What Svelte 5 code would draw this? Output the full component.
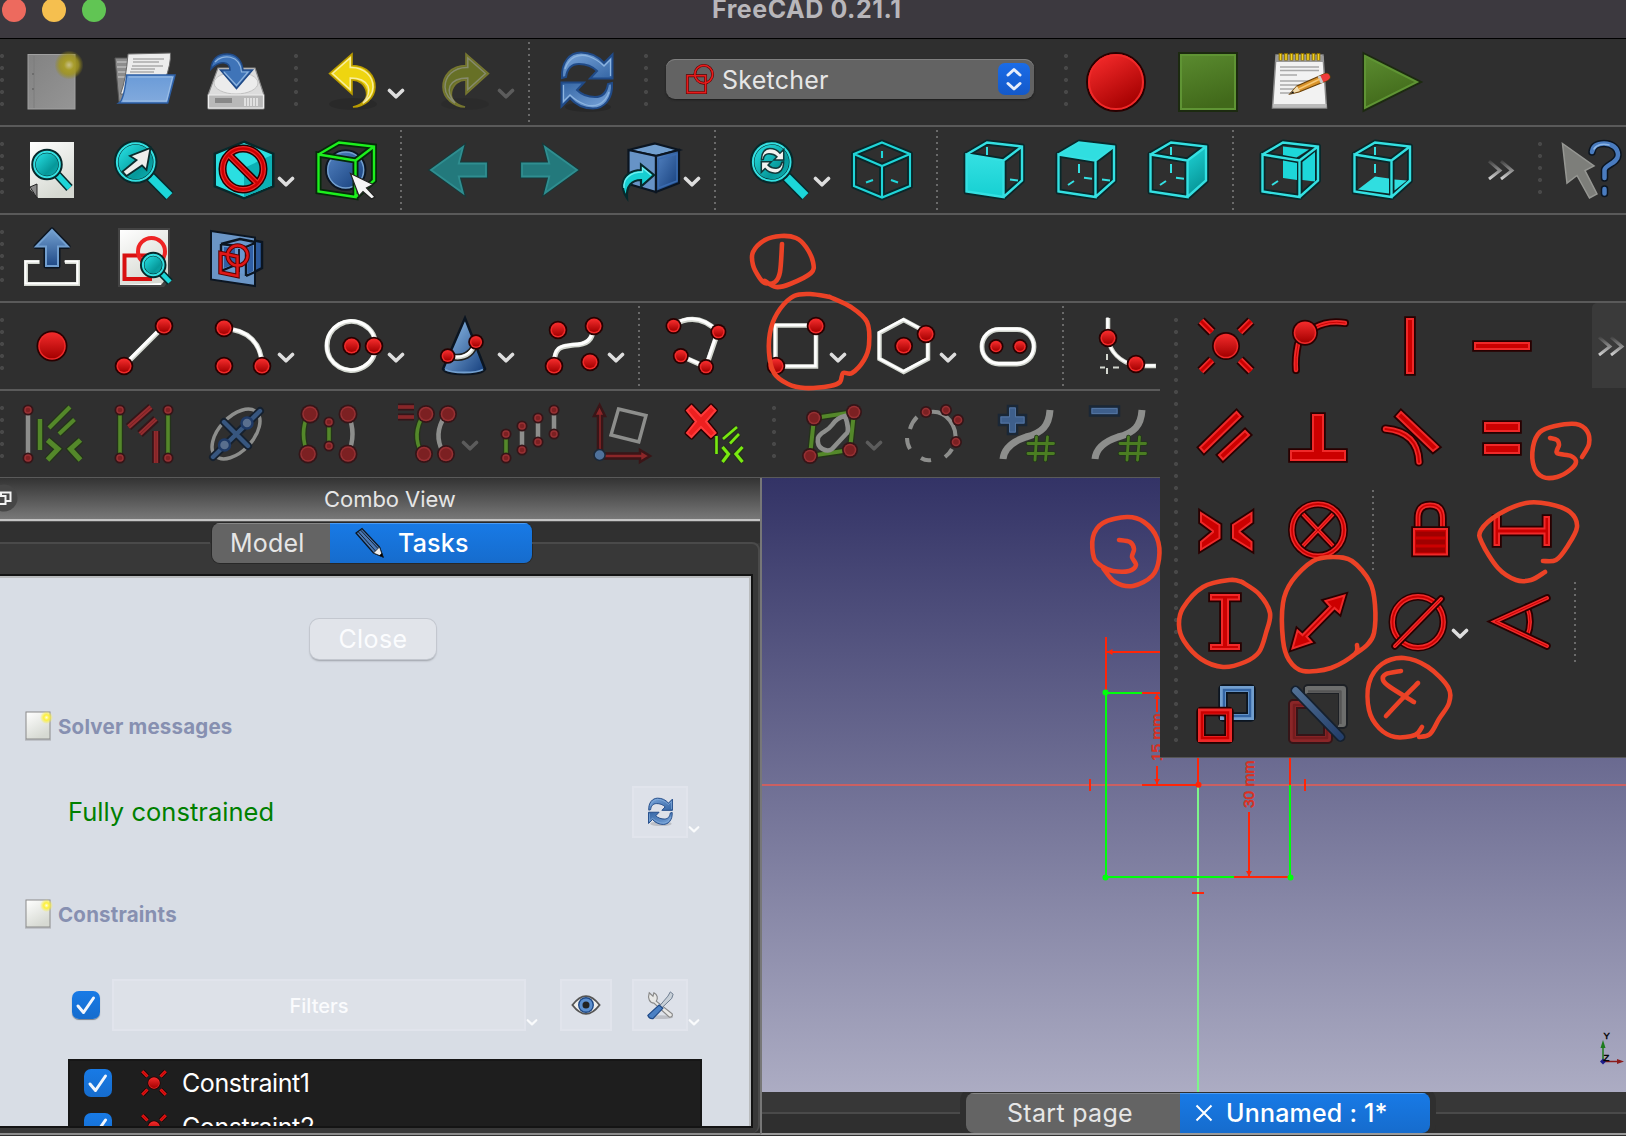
<script>
  // ---- drawing helpers: every icon lives in a 64 x 64 box ----
  const dot = (x, y, r = 9.3, dim = false) =>
    `<circle cx="${x}" cy="${y}" r="${r}" fill="${dim ? '#351518' : '#280000'}"/><circle cx="${x}" cy="${y}" r="${r - 1.7}" fill="${dim ? '#973033' : '#ef2929'}"/><circle cx="${x}" cy="${y}" r="${Math.max(r - 3.2, 1)}" fill="${dim ? '#7c2022' : 'url(#gRed)'}"/>`;
  const line = (d, w, c) =>
    `<path d="${d}" fill="none" stroke="${c}" stroke-width="${w}"/>`;
  const triple = (d, w, a, b, c, cap = 'butt') =>
    `<g fill="none" stroke-linecap="${cap}"><path d="${d}" stroke="${a}" stroke-width="${w}"/><path d="${d}" stroke="${b}" stroke-width="${w - 3.6}"/><path d="${d}" stroke="${c}" stroke-width="${Math.max(w - 7, 1)}"/></g>`;
  const redLine = (d, w = 9) => triple(d, w, '#280000', '#ef2929', '#cc0000', 'round');
  const redShape = (d) =>
    `<path d="${d}" fill="#cc0000" stroke="#280000" stroke-width="5.6"/><path d="${d}" fill="#cc0000" stroke="#ef2929" stroke-width="2"/>`;
  const shape = (d, fill, edge, hi) =>
    `<path d="${d}" fill="${fill}" stroke="${edge}" stroke-width="5" stroke-linejoin="round"/><path d="${d}" fill="${fill}" stroke="${hi}" stroke-width="2"/>`;
  const white = (d, w = 5) =>
    `<path d="${d}" fill="none" stroke="#d3d7cf" stroke-width="${w}"/><path d="${d}" fill="none" stroke="#fff" stroke-width="${w - 2}" transform="translate(-.5 -.6)"/>`;
  const green = (d, w = 4.4, c = '#54882a') =>
    line(d, w + 2.6, '#24331a') + line(d, w, c);
  const lime = (d, w = 2.6) => green(d, w, '#79ea10');
  const dimRed = (d, w = 8) => triple(d, w, '#351518', '#942c2f', '#7c2022');
  const grey = (d, w = 4.5) => line(d, w, '#8d8e8c');

  // wire cube shared by the standard-view icons
  const edges = 'M4.500 16.500L41.500 22.500V59L4.500 53.500ZM4.500 16.500L25 4.500L60 8.500V42.500L41.500 59M41.500 22.500L60 8.500';
  const cube = (fill, ticks) =>
    `<path d="${edges}" fill="none" stroke="#08282a" stroke-width="6" stroke-linejoin="round"/>${fill}${ticks ? `<path d="${ticks}" stroke="#34e0e2" stroke-width="2" fill="none"/>` : ''}<path d="${edges}" fill="none" stroke="#34e0e2" stroke-width="2.400"/>`;

  const lens = (x, y, r, hx, hy) => {
    const k = r * 0.77;
    const h = `M${x + k} ${y + k}L${hx} ${hy}`;
    const w = r * 0.42;
    return `<path d="${h}" stroke="#06292b" stroke-width="${w + 3}"/><path d="${h}" stroke="#1cd6d9" stroke-width="${w}"/><circle cx="${x}" cy="${y}" r="${r}" fill="url(#gTeal)" stroke="#06292b" stroke-width="4.500"/><circle cx="${x}" cy="${y}" r="${r - 0.7}" fill="none" stroke="#34e0e2" stroke-width="2"/>`;
  };

  const swirl = 'M8 28C7 12 16 2.500 27 2.500C36 2.500 44 6 50 13L58.500 4.500V28.500H36L43 21C38 16 31 14 25 14C16 14 13 20 12 27Z';
  const glint = 'M11 19C15 7 25 3 35 6.500C42 9 47 13 50 16L56.500 9.500V26';
  const refresh = `<ellipse cx="34" cy="57" rx="23" ry="5" fill="#000" opacity=".15"/><g fill="url(#gBlue)" stroke="#204a87" stroke-width="2"><path d="${swirl}"/><path d="${swirl}" transform="rotate(180 33 30.500)"/></g><g fill="none" stroke="#8cb4e0" stroke-width="1.300"><path d="${glint}"/><path d="${glint}" transform="rotate(180 33 30.500)"/></g>`;
  const undo = (a, b) =>
    `<ellipse cx="31" cy="54" rx="24" ry="6" fill="#000" opacity=".12"/><path d="M7.500 23.500L30 4V15.500C45 15.500 53 26 53 37C53 48 42 57 31 57C42 54 45.500 48 44.500 42C43 34 37 30 30 30V44Z" fill="${a}" stroke="${b}" stroke-width="1.600"/><path d="M10.500 23.500L28.200 8V17.500C43 17 51 27 51 37C51 44 46 50 41 53C46 47 48 41 46 36C43 30 37 28 28.200 28V39.500Z" fill="none" stroke="#fff" stroke-opacity=".6" stroke-width="1.500"/>`;
  const coincident =
    dot(32, 32, 14) +
    [['7 7', '18 18'], ['57 7', '46 18'], ['7 57', '18 46'], ['57 57', '46 46']]
      .map(([a, b]) => triple(`M${a}L${b}`, 10, '#280000', '#ef2929', '#cc0000'))
      .join('');
  const gridHash = line('M9 57C10 47 17 40 32 35C48 31 55 24 56 8', 7, '#8d8e8c') +
    `<g stroke-linecap="round">${line('M42.500 35L41 58M53.500 35L51.500 58M34 41.500H59.500M34 51.500H59.500', 4.600, '#22361a')}${line('M42.500 35L41 58M53.500 35L51.500 58M34 41.500H59.500M34 51.500H59.500', 2.800, '#4b7d22')}</g>`;

  const icons = {
    new: `<rect x="8" y="4.500" width="47" height="54.500" fill="url(#gPage)" stroke="#a0a0a0" stroke-width="1"/><path d="M14 6V58" stroke="#7c7c7c"/><circle cx="13" cy="24" r="1" fill="#666"/><circle cx="13" cy="39" r="1" fill="#666"/><circle cx="49" cy="15" r="14.500" fill="url(#gGlowDim)"/>`,
    open: `<path d="M3 8H30L20 52H7Z" fill="#8c8c8c" stroke="#555"/><path d="M5 12H16M5 17H15M6 22H14M6 27H14" stroke="#bbb" stroke-width="1.500"/><path d="M16 4L58.500 3Q59 14 53 30L30 44H8.500Q14 30 16 4Z" fill="#ececec" stroke="#666"/><path d="M21 9H52M21 12H47M20 16H51M19 19H43M18 22H42" stroke="#aaa" stroke-width="1.300"/><path d="M14.700 25H63L55.700 53H7Q12 50 14.700 25Z" fill="url(#gFolder)" stroke="#2d5fa5" stroke-width="1.500"/><path d="M16.500 27H60.500L54.500 51H11" fill="none" stroke="#9fc0e6"/>`,
    save: `<path d="M14 18H51L60 45V58Q60 59 59 59H5Q4 59 4 58V45Z" fill="#dcdcdc" stroke="#8a8a8a" stroke-width="1.200"/><ellipse cx="32" cy="33" rx="22" ry="11" fill="#ececec" stroke="#c2c2c2"/><path d="M4.500 45H59.500V58H4.500Z" fill="#b9b9b9" stroke="#eee" stroke-width="1.200"/><path d="M11 48H28V53H11Z" fill="#888"/><path d="M41 48V56M44 48V56M47 48V56M50 48V56M53 48V56" stroke="#fafafa" stroke-width="1.200"/><path d="M7 19C8 8 15 4 23 4C32 4 38 10 39 20H48.500L32.500 38.500L16.500 20H26C26 12 16 9 7 19Z" fill="#3f74b8" stroke="#204a87" stroke-width="1.500"/><path d="M11 12C18 4 36 4 37.500 22H44L32.500 35.500L20 22" fill="none" stroke="#8db3de" stroke-width="1.200"/>`,
    undo: undo('#eed510', '#b89a00'),
    redo: `<g transform="translate(64 0) scale(-1 1)" opacity=".52">${undo('#9aac1e', '#b8b830')}</g>`,
    refresh,
    record: `<circle cx="32" cy="32" r="29" fill="url(#gRec)" stroke="#280000" stroke-width="2"/><circle cx="32" cy="32" r="27" fill="none" stroke="#ef2929" stroke-width="2"/>`,
    stop: `<path d="M3 3H61V61H3Z" fill="url(#gGreen)" stroke="#1c2a10" stroke-width="2"/><path d="M5 5H59V59H5Z" fill="none" stroke="#5f9434" stroke-width="2"/>`,
    notes: `<path d="M8 5H55L58.500 58H4.500Z" fill="#f2f2f2" stroke="#888" stroke-width="1.500"/><path d="M8 6H55.500L56 12H7.500Z" fill="#999"/><path d="M4.800 54H58.500V57.500H4.800Z" fill="#bbb"/><path d="M12 17H51M12 20.500H51M12 25H29M12 31H51M12 35H45M12 39H30M12 43H26" stroke="#a9a9a9" stroke-width="1.300"/><path d="M12.500 3V10.500M18 3V10.500M23.500 3V10.500M29 3V10.500M34.500 3V10.500M40 3V10.500M45.500 3V10.500M50.500 3V10.500" stroke="#8a6d00" stroke-width="3.600"/><path d="M12.500 4V10M18 4V10M23.500 4V10M29 4V10M34.500 4V10M40 4V10M45.500 4V10M50.500 4V10" stroke="#f3d321" stroke-width="1.600"/><path d="M22 44L29 36L56 24Q61 22 62 27Q62 29 58 31L31 42Z" fill="#d9932a" stroke="#6b4108" stroke-width="1.300"/><path d="M22 44L29 36L32 41Z" fill="#f2dcae"/><path d="M52 26L56 24Q61 22 62 27Q62 29 58 31L55 32Z" fill="#ef3b3b"/><path d="M51 26L54 33" stroke="#ccc" stroke-width="3"/><path d="M22 44L25 41L26 43Z" fill="#111"/><path d="M31 39L52 29" stroke="#f7c876" stroke-width="1.500"/>`,
    play: `<path d="M4 4L60 32L4 60Z" fill="url(#gGreen)" stroke="#1c2a10" stroke-width="3"/><path d="M5 6L57 32L5 58Z" fill="url(#gGreen)" stroke="#5f9434" stroke-width="2"/>`,

    fitall: `<path d="M10 4H54V60H18L10 51Z" fill="url(#gSheet)"/><path d="M10 49L17 46V60Z" fill="#888" stroke="#222"/>${lens(27, 26.500, 13.500, 49.500, 50)}`,
    fitsel: `${lens(23.700, 24, 19.500, 57.500, 58)}<path d="M38.500 10L34.500 32L30 27.500L14.500 38L10.500 33.500L24.500 22L18 18Z" fill="#eeeeec" stroke="#0c2c2d" stroke-width="1.800"/>`,
    drawstyle: `<path d="M32 4L61 16V48L32 60L3 48V16Z" fill="#16cfd2" stroke="#06292b" stroke-width="3"/><path d="M32 5L60 16.500V47.500L32 59L4 47.500V16.500Z" fill="#2adfe1"/><path d="M32 30L60 17V47.500L32 59Z" fill="#0cb0b4"/><circle cx="31" cy="31" r="20.500" fill="none" stroke="#280000" stroke-width="8"/><path d="M17 17L45 45" stroke="#280000" stroke-width="8"/><circle cx="31" cy="31" r="20.500" fill="none" stroke="#ef2929" stroke-width="5"/><path d="M17 17L45 45" stroke="#ef2929" stroke-width="5"/><circle cx="31" cy="31" r="20.500" fill="none" stroke="#c00" stroke-width="2.500"/><path d="M17 17L45 45" stroke="#c00" stroke-width="2.500"/>`,
    bbox: `<circle cx="31.700" cy="32" r="19.500" fill="url(#gBall)" stroke="#0b1521" stroke-width="2.500"/><circle cx="31.700" cy="32" r="18" fill="none" stroke="#729fcf" stroke-width="1.500"/><path d="${edges}" fill="none" stroke="#06290a" stroke-width="6"/><path d="${edges}" fill="none" stroke="#1df01d" stroke-width="2.400"/><path d="M36.500 35.500L59 46.500L52.500 50L61 59L57.500 61L49 53.500L45 58Z" fill="#f4f4f4" stroke="#222" stroke-width="1.200"/>`,
    back: `<path d="M5 32L37 9L32.700 25.500H60V38.500H32.700L37 55Z" fill="#23797c" stroke="#17393a" stroke-width="4"/><path d="M5 32L37 9L32.700 25.500H60V38.500H32.700L37 55Z" fill="#23797c" stroke="#2f8e90" stroke-width="1.800"/>`,
    forward: `<path d="M59 32L27 9L31.300 25.500H4V38.500H31.300L27 55Z" fill="#23797c" stroke="#17393a" stroke-width="4"/><path d="M59 32L27 9L31.300 25.500H4V38.500H31.300L27 55Z" fill="#23797c" stroke="#2f8e90" stroke-width="1.800"/>`,
    link: `<path d="M37 5.500L61 12L38 18L10.500 12Z" fill="#729fcf" stroke="#0b1521" stroke-width="2.200"/><path d="M10.500 12L38 18V54L10.500 46Z" fill="#6793c6" stroke="#0b1521" stroke-width="2.200"/><path d="M38 18L61 12V45L38 54Z" fill="url(#gBall)" stroke="#0b1521" stroke-width="2.200"/><path d="M40.500 21L59 16V43L40.500 50Z" fill="none" stroke="#3b6cb0" stroke-width="1.500"/><path d="M9 60C2 50 2 33 23 32V26.500L36 37L23 48.500V42C14 42 8 48 9 60Z" fill="#16cfd2" stroke="#06292b" stroke-width="2.200"/><path d="M6 50C5 41 12 34 24.500 34V30L33 37" fill="none" stroke="#6ff0f2" stroke-width="1.400"/>`,
    zoomsync: `${lens(23.700, 24, 19.500, 57.500, 58)}<g transform="translate(10 9.500) scale(.44)" fill="#f2f2f0" stroke="#12393a" stroke-width="3.500"><path d="${swirl}"/><path d="${swirl}" transform="rotate(180 33 30.500)"/></g>`,
    axo: `<path d="M32 4.500L60 16V48L32 59.500L4 48V16ZM4 16L32 28L60 16M32 28V59.500" fill="none" stroke="#08282a" stroke-width="6" stroke-linejoin="round"/><path d="M32 4.500L60 16V48L32 59.500L4 48V16ZM4 16L32 28L60 16M32 28V59.500M32 13V20M16 44.500L23 42M41 42L48 44.500" fill="none" stroke="#20d5d8" stroke-width="2.100"/>`,
    front: cube('<path d="M4.500 16.500L41.500 22.500V59L4.500 53.500Z" fill="url(#gFace)"/>', 'M25 9V17M48 41.500L56 42.500'),
    top: cube('<path d="M4.500 16.500L25 4.500L60 8.500L41.500 22.500Z" fill="#30dee0"/>', 'M25 26V35M14 47L20 43M30 39.700L38 40.700M48 41.500L56 42.500'),
    right: cube('<path d="M41.500 22.500L60 8.500V42.500L41.500 59Z" fill="url(#gSide)"/>', 'M25 9V17M25 26V35M14 47L20 43M30 39.700L38 40.700'),
    rear: cube('<path d="M25 8.500L51 11.500L38.500 19.500L25 17ZM25 22.500L39 25V42L25 40ZM44.500 24L57 14V43.500L44.500 42Z" fill="#1dd6d9"/>', 'M14 47L20 43'),
    bottom: cube('<path d="M8 51.500L25 38.500L39 40.500V55.500ZM44.500 41.500L57 42.500L44.500 52.500Z" fill="#30dee0"/>', 'M25 9V17M25 26V35'),
    help: `<path d="M4.500 5.500L36 28L27 32.500L39 56L31.500 60L19 37.500L9 45Z" fill="#7d7e7a" stroke="#969793" stroke-width="1.500"/><g fill="none" stroke-linecap="round"><path d="M34 14C35 7 40 5.500 46 5.500C54 5.500 60 10 60 17C60 25 47 27 46.500 32V40M46.500 51V55.500" stroke="#0b1521" stroke-width="7.500"/><path d="M34 14C35 7 40 5.500 46 5.500C54 5.500 60 10 60 17C60 25 47 27 46.500 32V40M46.500 51V55.500" stroke="#4a7cc0" stroke-width="4.500"/><path d="M36 11C39 6 46 5.500 51 7" stroke="#8db6e5" stroke-width="1.500"/></g>`,

    leave: `${white('M19.600 36H6V58H58V36H45', 4)}${shape('M32 4L48 20.500H38V40H26V20.500H16Z', 'url(#gBlueV)', '#0b1521', '#729fcf')}`,
    viewsketch: `<path d="M6 2H58V53L52 61H6Z" fill="#444"/><path d="M8 4H56V50L49 59H8Z" fill="url(#gSheet)"/><path d="M49 59H8L49 57Z" fill="#fff"/><path d="M12.500 29.500H38V53H12.500Z" fill="none" stroke="#d81010" stroke-width="4"/><circle cx="39.500" cy="25.500" r="13.500" fill="none" stroke="#ee2424" stroke-width="4"/>${lens(41.200, 39, 11, 58, 56)}`,
    mapsketch: `<path d="M17 18L38 12L58 16V42L43 50L17 44Z" fill="#2c5a9c" stroke="#0b1521" stroke-width="2.500"/><path d="M7 5L51 11.500V60L7 53.500Z" fill="#6f9dd2" fill-opacity=".93" stroke="#0b1521" stroke-width="2"/><path d="M17 18L36 13L51 16M17 18L42 21V50M17 18V45L29 40M42 21L51 17M42 50L51 46" fill="none" stroke="#0b1521" stroke-width="2.400"/><path d="M20 21L31 22V38L20 42Z" fill="#2f5fa5"/><path d="M43.500 22L49 19V45L43.500 48Z" fill="#2f5fa5"/><path d="M35 23V46" stroke="#13233b" stroke-width="2"/><g fill="none" stroke="#5c0000" stroke-width="4.500"><path d="M16.500 27L33.500 30.500V50L16.500 46.500Z"/><circle cx="33.600" cy="29.500" r="10"/></g><g fill="none" stroke="#e01717" stroke-width="2.400"><path d="M16.500 27L33.500 30.500V50L16.500 46.500Z"/><circle cx="33.600" cy="29.500" r="10"/></g>`,

    point: dot(32, 32, 15.500),
    line: white('M12 52L52 12') + dot(12, 52) + dot(52, 12),
    arc: white('M12 15C36 15 50 30 50 52') + dot(12, 14) + dot(12, 52) + dot(50, 52),
    circle: white('M54 32A24.500 24.500 0 1 1 54 31.900') + dot(29.600, 32) + dot(52, 32),
    conic: `<path d="M33 4L53 55Q50 60 32 60Q14 60 11 55Z" fill="url(#gCone)" stroke="#0b1521" stroke-width="2.500"/><path d="M13 55.500Q18 58.500 32 58.500Q46 58.500 51 55.500" fill="none" stroke="#729fcf" stroke-width="1.800"/><path d="M16 42Q38 48 44 28" fill="none" stroke="#222" stroke-width="7"/>${white('M16 42Q38 48 44 28', 4)}${dot(15.700, 42, 7.800)}${dot(44, 28, 7.800)}`,
    bspline: white('M12 50C13 30 22 33 32 31C44 31 51 26 51 15') + dot(16, 16) + dot(52, 12) + dot(12, 52) + dot(48, 48),
    polyline: white('M9.500 11Q34 -3 54 18L42 53L17 42') + dot(9.500, 12, 8) + dot(54.400, 18, 8) + dot(16.800, 42, 8) + dot(42, 53, 8),
    rect: white('M11.500 11.500H52V52.500H11.500Z', 4.500) + dot(52, 12) + dot(12, 52),
    polygon: white('M29.700 6L54 19V45L29.700 58L5.500 45V19Z', 4.500) + dot(29.700, 32) + dot(52, 20),
    slot: `<rect x="6" y="15.500" width="52" height="34.500" rx="17" fill="none" stroke="#d3d7cf" stroke-width="4.800"/><rect x="5.600" y="15" width="52" height="34.500" rx="17" fill="none" stroke="#fff" stroke-width="3"/>${dot(20, 32.500, 7.500)}${dot(44, 32.500, 7.500)}`,
    fillet: white('M20 4V24C22 38 32 48 48 52H68', 4.500) + `<path d="M19 40V46M19 54V60M12 53.500H17M25 53.500H31" stroke="#d3d7cf" stroke-width="2"/>` + dot(20, 24) + dot(48, 50),

    c1: grey('M8 8V56') + dot(8, 8, 5.500, 1) + dot(8, 56, 5.500, 1) + green('M20 17V48') + green('M29 26L50 5', 4) + green('M39 32L54.500 17.500', 4) + green('M27.500 38L38 47L27.500 58', 5) + green('M60.500 38L50.500 47L60.500 58', 5),
    c2: green('M8 8V56', 3.600) + green('M56 8V56', 3.600) + dimRed('M16.500 25L39 5') + dimRed('M28 32L44 17') + dimRed('M44 29V61') + dot(8, 8, 5.500, 1) + dot(8, 56, 5.500, 1) + dot(56, 8, 5.500, 1) + dot(56, 56, 5.500, 1),
    c3: `<ellipse cx="32" cy="32" rx="30" ry="17" transform="rotate(-47 32 32)" fill="none" stroke="#8d8e8c" stroke-width="3.500"/>${triple('M9 55L56 9M20 20L44 44', 8, '#15202e', '#37567f', '#37567f', 'round')}<g fill="#5a6f8e" stroke="#1f3a66" stroke-width="2.500"><circle cx="43" cy="21" r="5.500"/><circle cx="20.500" cy="43" r="5.500"/></g>`,
    c4: green('M12 12Q3 32 12 52', 3.600) + grey('M52 12Q61 32 52 52') + green('M33 20V44', 3.600) + dot(14, 12, 9.500, 1) + dot(12, 52, 9.500, 1) + dot(52, 12, 9.500, 1) + dot(52, 52, 9.500, 1) + dot(33, 20, 5.500, 1) + dot(33, 44, 5.500, 1),
    c5: dimRed('M2 5H18', 7) + dimRed('M2 15H18', 7) + green('M28 12Q15 32 26 52', 3.600) + grey('M49 14Q37 32 47 50') + dot(30, 12, 9, 1) + dot(52, 12, 9, 1) + dot(28, 52, 9, 1) + dot(50, 52, 9, 1),
    c6: green('M8 32V56', 3.600) + grey('M24 24V48M40 16V40M56 8V32') + [8, 24, 40, 56].map((x, i) => dot(x, 32 - i * 8, 5.500, 1) + dot(x, 56 - i * 8, 5.500, 1)).join(''),
    c7: `<path d="M8 52V14H4L9.600 3L15 14H12V52ZM10 51.500H50V48L60 54L50 60V56.500H10Z" fill="#8b2628" stroke="#3a1517" stroke-width="2.500"/>${line('M28.500 7L56 13.500L48.800 40L21 33Z', 3.400, '#8d8e8c')}<circle cx="9.600" cy="53" r="5.500" fill="#4f719b" stroke="#1b2838" stroke-width="1.500"/>`,
    c8: shape('M5 8.500L9.500 4L19 14L29 4L33.500 8.500L24 19.500L33.500 31L29 35L19 25L9.500 35L5 31L14 19.500Z', '#ee2020', '#280000', '#ff3a3a') + lime('M34.500 34V52') + lime('M41 37L55 25') + lime('M48 41.500L57 32') + lime('M40.500 45L46.500 52L40.500 60', 3.200) + lime('M60.500 45L54 52L60.500 60', 3.200),
    c9: green('M14 16L54 10L50 48L10 54Z', 4) + line('M18 36C20 30 27 30 32 23C36 17 40 15 45 14C48 22 49 30 46 32L32 47C28 50 16 48 18 36Z', 4.500, '#8d8e8c') + dot(14, 16, 8, 1) + dot(54, 10, 8, 1) + dot(50, 48, 8, 1) + dot(10, 54, 8, 1),
    c10: grey('M28 10C44 8 56 24 53 40M15 15Q10 20 8 27M5 36Q5 42 8 47M19 56Q24 59 29 58M43 55Q48 51 50 47', 4) + dot(24, 10, 6, 1) + dot(44, 8, 6, 1) + dot(56, 18, 6, 1) + dot(54, 40, 6, 1),
    c11: gridHash + `<path d="M14 4H23V13H32V23H23V32H14V23H5V13H14Z" fill="#3e5f8c" stroke="#1a2736" stroke-width="2.500"/><path d="M15.500 6H21.500V15H30V21H21.500V30H15.500V21H7V15H15.500Z" fill="none" stroke="#52739f"/>`,
    c12: gridHash + `<path d="M4 4.500H33V13.500H4Z" fill="#3e5f8c" stroke="#1a2736" stroke-width="2.500"/><path d="M6 6.500H31V11.500H6Z" fill="none" stroke="#52739f"/>`,

    coincident,
    pointon: redLine('M12 30Q9 44 10 56', 8) + redLine('M28 14Q42 6 59 9', 8) + dot(19, 18.700, 13),
    vertical: redShape('M29 5H35V59H29Z'),
    horizontal: redShape('M5 29H59V35H5Z'),
    parallel: redShape('M6 41.500L42.500 6L46.500 10.500L10 46Z') + redShape('M25 49L51 25L55 29L29 53.500Z'),
    perpendicular: redShape('M27 9H37V45H59V54H5V45H27Z'),
    tangent: redShape('M23 6L60 41L55 45L19 10.500Z') + redLine('M7.500 23Q40 26 41 56', 9),
    equal: redShape('M15 17H49V25H15Z') + redShape('M15 39H49V47H15Z'),
    symmetric: redShape('M7 15L25.500 27V40L7 51.500V44L19 34V33L7 24Z') + redShape('M57.500 15L39 27V40L57.500 51.500V44L45.500 34V33L57.500 24Z'),
    block: redLine('M14 13L50 51M50 13L14 51', 7.500) + `<g fill="none"><circle cx="32" cy="32" r="26" stroke="#280000" stroke-width="8"/><circle cx="32" cy="32" r="26" stroke="#ef2929" stroke-width="4.800"/><circle cx="32" cy="32" r="26" stroke="#c00" stroke-width="1.800"/></g>`,
    lock: redLine('M20 30V20Q20 7 32 7Q44.500 7 44.500 20V30', 8.500) + redShape('M16 31H49V56.500H16Z') + `<path d="M18 36H47M18 44H47M18 52H47" stroke="#a00000" stroke-width="5"/>`,
    hdist: redShape('M4.500 19H9V30.500H54.500V19H59V47H54.500V35.500H9V47H4.500Z'),
    vdist: redShape('M17 5H45V9.500H34V55H45V59H17V55H28V9.500H17Z'),
    distance: redShape('M58.500 5.500L53.500 22.500L48.500 18L20.500 46.500L25.500 52L6.500 58.500L11.500 40.500L16.500 45L44.500 16.500L39.500 11Z'),
    diameter: `<g fill="none"><circle cx="32" cy="32" r="25.500" stroke="#280000" stroke-width="8"/><circle cx="32" cy="32" r="25.500" stroke="#ef2929" stroke-width="4.800"/><circle cx="32" cy="32" r="25.500" stroke="#c00" stroke-width="1.800"/></g>${redLine('M9 56L55 9', 7.500)}`,
    angle: redLine('M39 17Q45 32 39 46', 7.500) + redLine('M59 8L7 31.500L59 56', 7.500),
    driving: `<g fill="none"><path d="M29 7H57V35H29Z" stroke="#0b1521" stroke-width="9.500" stroke-linejoin="round"/><path d="M29 7H57V35H29Z" stroke="#729fcf" stroke-width="6"/><path d="M30 8H56V34H30Z" stroke="#3465a4" stroke-width="2.500"/><path d="M7 29.500H35V57H7Z" stroke="#280000" stroke-width="9.500" stroke-linejoin="round"/><path d="M7 29.500H35V57H7Z" stroke="#ef2929" stroke-width="6"/><path d="M8 30.500H34V56H8Z" stroke="#c00" stroke-width="2.500"/></g>`,
    activate: `<g fill="none" stroke-linejoin="round"><path d="M22 7H57V42H22Z" stroke="#1d2025" stroke-width="10"/><path d="M22 7H57V42H22Z" stroke="#6d6e6d" stroke-width="6"/><path d="M23 8H56V41H23Z" stroke="#555" stroke-width="2.500"/><path d="M7 22H42V57H7Z" stroke="#351518" stroke-width="10" fill="#2f2f2f"/><path d="M7 22H42V57H7Z" stroke="#8b2628" stroke-width="6"/><path d="M8 23H41V56H8Z" stroke="#761c1e" stroke-width="2.500"/><path d="M13 12H52V50Z" fill="#2f2f2f"/><path d="M22 7H57V42H54V10H22Z" stroke="#1d2025" stroke-width="4"/><path d="M19 5H59V44H53V11H19Z" fill="#6d6e6d"/><path d="M22 9.500H54.500V42" stroke="#555" stroke-width="2.500"/><path d="M9.500 8.500L54.500 55" stroke="#15202e" stroke-width="10" stroke-linecap="round"/><path d="M9.500 8.500L54.500 55" stroke="url(#gSlash)" stroke-width="6.500" stroke-linecap="round"/></g>`,

    note: `<rect x="4" y="2" width="24" height="27" fill="url(#gSheet)" stroke="#8a8a8a"/><path d="M3 30H29" stroke="#777" stroke-opacity=".5"/><circle cx="24.500" cy="7.500" r="6.500" fill="url(#gGlow)"/>`,
    eye: `<path d="M3 32Q32 -6 61 32Q32 70 3 32Z" fill="#eeeeec" stroke="#555" stroke-width="4"/><circle cx="32" cy="32" r="15.500" fill="#5c8fcf" stroke="#204a87" stroke-width="3"/><circle cx="32" cy="32" r="7.500" fill="#222"/>`,
    tools: `<ellipse cx="34" cy="58" rx="26" ry="4" fill="#000" opacity=".15"/><path d="M9 6L17 13L19 6C27 10 28 18 24 24L58 51Q60 58 52 58L19 28C10 28 5 18 9 6Z" fill="#e8e8e6" stroke="#888" stroke-width="2.500"/><path d="M54 4L60 9L57 18L36 38L31 34L49 13Z" fill="#c8d0d8" stroke="#68788c" stroke-width="2"/><path d="M30 32L38 39L17 61Q9 62 6 54Z" fill="#4a80c4" stroke="#204a87" stroke-width="2.500"/>`,
    pencil: `<path d="M2 12L14 3L49 40L56 60L37 52Z" fill="#4b78b4" stroke="#0b1521" stroke-width="2.500"/><path d="M6 9L41 48M11 6L46 43" stroke="#0b1521" stroke-width="1.800"/><path d="M37 52L49 40L56 60Z" fill="#eee" stroke="#0b1521" stroke-width="1.500"/><path d="M48 57L54 52L56 60Z" fill="#000"/>`,
    sketch: `<g fill="none"><path d="M5 25H44V61H5Z" stroke="#5c0000" stroke-width="6"/><circle cx="40" cy="22" r="19" stroke="#5c0000" stroke-width="6"/><path d="M5 25H44V61H5Z" stroke="#e61d1d" stroke-width="3.400"/><circle cx="40" cy="22" r="19" stroke="#e61d1d" stroke-width="3.400"/></g>`,
  };

  const b = (n, dd = 0) => ({ k: 'btn', n, dd });
  const dim = (n) => ({ k: 'btn', n, dd: 2 });
  const sep = { k: 'sep' };
  const grip = { k: 'grip' };
  const bars = [
    [grip, b('new'), b('open'), b('save'), grip, b('undo', 1), dim('redo'), sep, b('refresh'), grip, { k: 'combo' }, grip, b('record'), b('stop'), b('notes'), b('play')],
    [grip, b('fitall'), b('fitsel'), b('drawstyle', 1), b('bbox'), sep, b('back'), b('forward'), b('link', 1), sep, b('zoomsync', 1), b('axo'), sep, b('front'), b('top'), b('right'), sep, b('rear'), b('bottom'), { k: 'more' }, grip, b('help')],
    [grip, b('leave'), b('viewsketch'), b('mapsketch')],
    [grip, b('point'), b('line'), b('arc', 1), b('circle', 1), b('conic', 1), b('bspline', 1), sep, b('polyline'), b('rect', 1), b('polygon', 1), b('slot'), sep, b('fillet')],
    [grip, b('c1'), b('c2'), b('c3'), b('c4'), dim('c5'), b('c6'), b('c7'), b('c8'), grip, dim('c9'), b('c10'), b('c11'), b('c12')],
  ];
  const palette = [
    [b('coincident'), b('pointon'), b('vertical'), b('horizontal')],
    [b('parallel'), b('perpendicular'), b('tangent'), b('equal')],
    [b('symmetric'), b('block'), sep, b('lock'), b('hdist')],
    [b('vdist'), b('distance'), b('diameter', 1), b('angle'), sep],
    [b('driving'), b('activate')],
  ];

  // ---- freehand ink, smoothed through its points ----
  const strokes = [
    [[765, 281], [776, 287], [790, 284], [811, 273], [813, 262], [806, 247], [796, 238], [781, 236], [765, 240], [753, 252], [753, 265], [759, 277], [765, 283], [775, 282], [780, 272], [782, 244]],
    [[830, 297], [810, 294], [794, 296], [780, 309], [771, 328], [769, 352], [774, 373], [788, 384], [805, 388], [830, 386], [840, 382], [843, 373], [852, 373], [864, 360], [869, 345], [867, 322], [851, 307], [830, 297]],
    [[1582, 457], [1589, 444], [1587, 431], [1576, 424], [1555, 426], [1540, 432], [1533, 447], [1534, 467], [1543, 477], [1557, 477], [1570, 470], [1576, 462], [1571, 456], [1557, 453], [1559, 445], [1557, 440], [1550, 438]],
    [[1545, 572], [1531, 580], [1516, 580], [1498, 568], [1482, 543], [1481, 530], [1499, 514], [1526, 503], [1549, 504], [1570, 512], [1577, 527], [1567, 547], [1556, 560], [1543, 561]],
    [[1242, 582], [1230, 580], [1203, 587], [1183, 608], [1179, 625], [1184, 641], [1201, 659], [1223, 667], [1245, 662], [1259, 652], [1266, 633], [1270, 613], [1259, 594], [1242, 582]],
    [[1357, 645], [1355, 654], [1331, 668], [1303, 671], [1289, 660], [1283, 640], [1283, 603], [1292, 581], [1313, 561], [1333, 557], [1352, 561], [1370, 582], [1375, 605], [1374, 633], [1367, 645], [1355, 654]],
    [[1119, 540], [1130, 542], [1134, 549], [1132, 557], [1136, 565], [1129, 571], [1113, 571], [1103, 567], [1094, 558], [1093, 537], [1103, 523], [1127, 517], [1144, 522], [1157, 538], [1159, 559], [1152, 576], [1133, 586], [1115, 582], [1103, 568]],
    [[1422, 727], [1415, 735], [1395, 737], [1379, 728], [1369, 710], [1369, 683], [1382, 664], [1404, 658], [1428, 667], [1448, 687], [1449, 703], [1439, 719], [1430, 734], [1419, 737]],
    [[1401, 671], [1386, 674], [1383, 680], [1390, 687], [1414, 702]],
    [[1418, 683], [1402, 699], [1386, 716]],
  ];
  const smooth = (p) => {
    let d = `M${p[0]}`;
    for (let i = 0; i < p.length - 1; i++) {
      const a = p[i - 1] ?? p[i], s = p[i], e = p[i + 1], z = p[i + 2] ?? e;
      d += `C${s[0] + (e[0] - a[0]) / 6} ${s[1] + (e[1] - a[1]) / 6} ${e[0] - (z[0] - s[0]) / 6} ${e[1] - (z[1] - s[1]) / 6} ${e[0]} ${e[1]}`;
    }
    return d;
  };
  const ink = strokes.map(smooth);
  const constraints = ['Constraint1', 'Constraint2'];
</script>

{#snippet icon(n, cls = '', box = '0 0 64 64')}
  <svg class="icon {cls}" viewBox={box}>{@html icons[n]}</svg>
{/snippet}

{#snippet chevron(cls = '')}
  <svg class="chev {cls}" viewBox="0 0 18 12"><path d="M2.500 2.500L9 8.800L15.500 2.500" /></svg>
{/snippet}

{#snippet raquo()}
  <svg class="raquo" viewBox="0 0 28 20"><path d="M1 1L12 10.500L1 19M13 1L24 10.500L13 19" /></svg>
{/snippet}

{#snippet items(list)}
  {#each list as it}
    {#if it.k === 'btn'}
      <div class="btn" class:dd={it.dd}>
        {@render icon(it.n)}
        {#if it.dd}{@render chevron(it.dd === 2 ? 'faded' : '')}{/if}
      </div>
    {:else if it.k === 'sep'}
      <i class="sep"></i>
    {:else if it.k === 'grip'}
      <i class="grip"></i>
    {:else if it.k === 'more'}
      <div class="more">{@render raquo()}</div>
    {:else}
      <div class="combo">
        {@render icon('sketch', 'wb')}
        <span>Sketcher</span>
        <svg class="updown" viewBox="0 0 32 32"><path d="M10 12L16 6.500L22 12M10 20.500L16 26L22 20.500" /></svg>
      </div>
    {/if}
  {/each}
{/snippet}

{#snippet check()}
  <svg class="check" viewBox="0 0 28 28"><path d="M6 15L11.500 21.500L21.500 7" /></svg>
{/snippet}

<svg class="defs" width="0" height="0">
  <defs>
    <linearGradient id="gRed" x2="0" y2="1"><stop stop-color="#ef2929" /><stop offset="1" stop-color="#a40000" /></linearGradient>
    <linearGradient id="gRec" x2=".6" y2="1"><stop stop-color="#ff3030" /><stop offset="1" stop-color="#a40000" /></linearGradient>
    <linearGradient id="gGreen" x2=".3" y2="1"><stop stop-color="#5b8c30" /><stop offset="1" stop-color="#41691a" /></linearGradient>
    <linearGradient id="gTeal" x2="1" y2="1"><stop offset=".2" stop-color="#20d2d5" /><stop offset=".65" stop-color="#06989a" /><stop offset="1" stop-color="#0fb4b6" /></linearGradient>
    <linearGradient id="gFace" x2="0" y2="1"><stop stop-color="#34e0e2" /><stop offset="1" stop-color="#16d0d2" /></linearGradient>
    <linearGradient id="gSide" x2=".3" y2="1"><stop stop-color="#20d5d8" /><stop offset="1" stop-color="#069496" /></linearGradient>
    <linearGradient id="gBlue" x2="1" y2="1"><stop stop-color="#7ba7dc" /><stop offset="1" stop-color="#3465a4" /></linearGradient>
    <linearGradient id="gBlueV" x2="0" y2="1"><stop stop-color="#729fcf" /><stop offset="1" stop-color="#204a87" /></linearGradient>
    <linearGradient id="gFolder" x2="0" y2="1"><stop stop-color="#6a9bd8" /><stop offset="1" stop-color="#82aadd" /></linearGradient>
    <linearGradient id="gBall" x2="1" y2="1"><stop stop-color="#5585c4" /><stop offset=".8" stop-color="#204a87" /></linearGradient>
    <linearGradient id="gCone" x2="1" y2="1"><stop offset=".3" stop-color="#729fcf" /><stop offset=".9" stop-color="#204a87" /></linearGradient>
    <linearGradient id="gSlash" x2="1" y2="1"><stop stop-color="#506f94" /><stop offset="1" stop-color="#243f6b" /></linearGradient>
    <linearGradient id="gSheet" x2=".5" y2="1"><stop stop-color="#fff" /><stop offset="1" stop-color="#d6d9d2" /></linearGradient>
    <linearGradient id="gPage" x2="1" y2="1"><stop stop-color="#828282" /><stop offset="1" stop-color="#959595" /></linearGradient>
    <radialGradient id="gGlowDim"><stop stop-color="#c8c08a" /><stop offset=".35" stop-color="#a79c2a" /><stop offset=".65" stop-color="#a09420" stop-opacity=".85" /><stop offset="1" stop-color="#968a10" stop-opacity="0" /></radialGradient>
    <radialGradient id="gGlow"><stop stop-color="#fffde0" /><stop offset=".4" stop-color="#fdf03a" /><stop offset="1" stop-color="#fdf03a" stop-opacity="0" /></radialGradient>
    <linearGradient id="gFade" x1="0" y1="0" x2="0" y2="20" gradientUnits="userSpaceOnUse"><stop stop-color="#3a3a3a" /><stop offset="1" stop-color="#d8d8d8" /></linearGradient>
  </defs>
</svg>

<div class="app">
  <header class="titlebar">
    <div class="lights"><i class="r"></i><i class="y"></i><i class="g"></i></div>
    <span>FreeCAD 0.21.1</span>
  </header>

  {#each bars as list}
    <div class="bar">{@render items(list)}</div>
  {/each}

  <main>
    <section class="dock">
      <div class="docktitle">
        <svg class="float" viewBox="0 0 18 28"><circle cx="4" cy="14" r="13.500" /><path d="M-4 12H5.500V20H-4M1 12V8.500H10.500V17H5.500" /></svg>
        <span>Combo View</span>
      </div>
      <div class="tabrow">
        <i class="rule"></i>
        <div class="tabs">
          <span class="tab model">Model</span>
          <span class="tab on tasks">{@render icon('pencil', 'pen')}<b>Tasks</b></span>
        </div>
        <i class="rule end"></i>
      </div>
      <div class="frame">
        <div class="panel">
          <div class="close">Close</div>
          <div class="head h1">{@render icon('note', 'note', '0 0 32 32')}<span>Solver messages</span></div>
          <div class="row status">
            <span class="ok">Fully constrained</span>
            <div class="tool wide">{@render icon('refresh', 'small')}</div>{@render chevron('tiny')}
          </div>
          <div class="head h2">{@render icon('note', 'note', '0 0 32 32')}<span>Constraints</span></div>
          <div class="row filter">
            {@render check()}
            <div class="filters">Filters</div>{@render chevron('tiny')}
            <div class="tool eye">{@render icon('eye', 'small')}</div>
            <div class="tool wide">{@render icon('tools', 'small')}</div>{@render chevron('tiny')}
          </div>
          <div class="list">
            {#each constraints as c}
              <div class="item">{@render check()}{@render icon('coincident', 'mini')}<span>{c}</span></div>
            {/each}
          </div>
        </div>
      </div>
    </section>

    <section class="view">
      <svg class="scene" viewBox="762 478 864 614">
        <g fill="none" stroke-width="2">
          <path d="M762 785H1626" stroke="#cb6062" />
          <path d="M1198 787V1092" stroke="#7df58b" />
          <path d="M1142 693H1106V877H1234M1290 785V877" stroke="#00ff0c" />
          <path d="M1106 637V692M1106 652H1165M1142 693H1165M1157 695V712M1157 766V784M1142 785H1198M1198 750V784M1290 750V785M1249 812V876M1234 877H1290M1090 779V791M1305 779V791M1192 893H1204" stroke="#ff2508" />
        </g>
        <g fill="#ff2508">
          <path d="M1107 652L1112.500 649V655ZM1157 693.500L1154 699H1160ZM1157 784L1154 779H1160ZM1249 876.500L1246 871H1252Z" />
          <circle cx="1198.500" cy="784.700" r="3" />
        </g>
        <g fill="#00ff0c"><circle cx="1105.500" cy="692.500" r="3" /><circle cx="1105.500" cy="877.500" r="3" /><circle cx="1290.500" cy="877.500" r="3" /></g>
        <g class="dims">
          <text transform="translate(1161.500 761) rotate(-90)">15 mm</text>
          <text transform="translate(1254 808) rotate(-90)">30 mm</text>
        </g>
        <path d="M1603 1061V1046" stroke="#1c7c1c" stroke-width="1.500" />
        <path d="M1600.500 1048L1603 1040L1605.500 1048Z" fill="#1c7c1c" />
        <path d="M1603 1061.500H1618" stroke="#8c1c1c" stroke-width="1.500" />
        <path d="M1617 1059L1624 1061.500L1617 1064Z" fill="#8c1c1c" />
        <path d="M1603 1058.500L1606 1061.500L1603 1064.500L1600 1061.500Z" fill="#1c1c8c" />
        <g class="axes"><text x="1603.500" y="1039">Y</text><text x="1603.500" y="1061">Z</text></g>
      </svg>
      <div class="doctabs">
        <i class="rule"></i>
        <div class="tabs">
          <span class="tab start">Start page</span>
          <span class="tab on doc"><svg class="x" viewBox="0 0 18 18"><path d="M1.500 1.500L16.500 16.500M16.500 1.500L1.500 16.500" /></svg><b>Unnamed : 1*</b></span>
        </div>
        <i class="rule end"></i>
      </div>
    </section>
  </main>

  <aside class="palette">
    <i class="longgrip"></i>
    <div class="rows">
      {#each palette as list}
        <div class="prow">{@render items(list)}</div>
      {/each}
    </div>
    <div class="expand">{@render raquo()}</div>
  </aside>

  <svg class="ink" viewBox="0 0 1626 1136">
    {#each ink as d}<path {d} />{/each}
  </svg>
</div>

<style>
  :global(body) { margin: 0; background: #2f2f2f; }
  .defs { position: absolute; }
  .app {
    position: relative; width: 1626px; height: 1136px; overflow: hidden;
    display: flex; flex-direction: column; background: #2f2f2f; color: #e6e6e6;
    font-family: Inter, "Liberation Sans", sans-serif; font-size: 25px;
  }
  .titlebar {
    flex: none; height: 38px; border-bottom: 1px solid #000; background: #3c393f;
    display: grid; grid-template-columns: 712px 1fr; align-items: start;
  }
  .titlebar span { color: #b8b6ba; font-weight: 700; font-size: 25px; line-height: 30px; margin-top: -6px; letter-spacing: 0.55px; white-space: nowrap; }
  .lights { display: flex; gap: 16px; padding-left: 2px; margin-top: -2px; }
  .lights i { width: 24px; height: 24px; border-radius: 50%; }
  .r { background: #ed6a5e; } .y { background: #f5bf4f; } .g { background: #61c554; }

  .bar { flex: none; display: flex; align-items: center; height: 86px; border-bottom: 2px solid #5a5a5a; background: #2f2f2f; overflow: hidden; }
  .bar:nth-of-type(5) { border-bottom-width: 1px; }
  .icon { display: block; flex: none; width: 64px; height: 64px; overflow: visible; }
  .btn { flex: none; width: 92px; height: 64px; display: flex; align-items: center; justify-content: center; }
  .btn.dd { width: 110px; justify-content: flex-start; padding-left: 22px; box-sizing: border-box; }
  .chev { flex: none; width: 18px; height: 12px; margin: 24px 0 0 1px; fill: none; stroke: #dedede; stroke-width: 3.6; stroke-linecap: round; stroke-linejoin: round; }
  .chev.faded { stroke: #5c5c5c; }
  .chev.tiny { width: 12px; height: 9px; margin: 34px 0 0; stroke: #fafbfc; stroke-width: 3.2; }
  .sep { flex: none; width: 2px; height: 80px; margin: 0 10px 0 8px; background: linear-gradient(#6a6a6a 2px, transparent 2px) 0 0 / 2px 6px; }
  .grip { flex: none; width: 4px; height: 60px; margin: -4px 2px 0 12px; background: radial-gradient(circle, #484848 1.8px, transparent 2.3px) 0 0 / 4px 12px; }
  .bar > .grip:first-child { margin-left: 0; }
  .raquo { display: block; width: 28px; height: 20px; fill: none; stroke: url(#gFade); stroke-width: 3; }
  .more { width: 28px; margin: 0 10px 0 60px; }
  .combo {
    flex: none; width: 368px; height: 40px; margin: -6px 18px 0 16px; padding: 0 4px 0 19px; box-sizing: border-box;
    display: flex; align-items: center; border-radius: 9px; background: #636363; box-shadow: inset 0 1px #808080, 0 1px 2px #1c1c1c;
  }
  .combo span { flex: 1; margin: 1px 0 0 7px; letter-spacing: 0.25px; }
  .icon.wb { width: 30px; height: 30px; }
  .updown { width: 32px; height: 32px; border-radius: 7px; background: linear-gradient(#1a6ce8, #1459c9); fill: none; stroke: #e8eefa; stroke-width: 3; stroke-linecap: round; stroke-linejoin: round; }

  main { flex: 1; display: grid; grid-template-columns: 760px 1fr; min-height: 0; }
  .dock { display: flex; flex-direction: column; min-width: 0; height: 655px; border-bottom: 2px solid #8d8d8d; }
  .docktitle { display: grid; grid-template-columns: 324px 1fr; align-items: center; height: 41px; background: linear-gradient(#333, #787878); border-bottom: 2px solid #c4c4c4; }
  .docktitle span { font-size: 22px; letter-spacing: -0.05px; }
  .float { width: 18px; height: 28px; fill: #464646; margin-top: -1px; }
  .float path { fill: none; stroke: #f2f2f2; stroke-width: 2; }
  .tabrow { display: grid; grid-template-columns: 210px 322px 1fr; height: 53px; background: linear-gradient(#303030 21px, #383838 21px); border-top: 1px solid #555; box-sizing: border-box; }
  .rule { height: 2px; margin-top: 20px; background: #4a4a4a; }
  .rule.end { height: 32px; box-sizing: border-box; background: none; border: solid #4a4a4a; border-width: 2px 2px 0 0; border-radius: 0 8px 0 0; }
  .tabs { display: flex; height: 40px; border-radius: 8px; overflow: hidden; margin: 1px 0 0 2px; box-shadow: 0 0 0 1px #282828; width: 320px; }
  .tab { display: flex; align-items: center; background: #646464; box-shadow: inset 0 1px #858585; white-space: nowrap; }
  .tab.on { background: linear-gradient(#187ae6, #166ccd); box-shadow: inset 0 1px #4a9bf5; color: #fff; }
  .tab b { font-weight: 500; letter-spacing: 0.2px; }
  .tab.model { width: 118px; padding-left: 18px; box-sizing: border-box; letter-spacing: 0.2px; }
  .tab.tasks { width: 202px; padding-left: 24px; box-sizing: border-box; }
  .icon.pen { width: 34px; height: 32px; margin-right: 10px; }
  .frame { flex: 1; min-height: 0; background: #383838; padding: 0 6px 7px 0; border-right: 2px solid #4a4a4a; border-radius: 0 0 8px 0; }
  .panel {
    height: 550px; box-sizing: border-box; overflow: hidden; background: #d8dde5;
    outline: 2px solid #141414; border: solid #b9bbbd; border-width: 2px 2px 0 0; margin: 2px 1px 0 0;
  }
  .close {
    width: 126px; height: 40px; box-sizing: border-box; padding-bottom: 1px; margin: 41px 0 0 310px; border-radius: 9px; display: grid; place-items: center;
    color: #fbfcfe; background: #e1e4ea; box-shadow: 0 0 0 1px #c3c7cf, 0 2px 2px #9da1a8; letter-spacing: 0.4px;
  }
  .head { display: flex; align-items: center; height: 32px; padding-left: 22px; color: #8790b1; font-weight: 700; font-size: 20.5px; letter-spacing: 0.2px; }
  .icon.note { width: 32px; height: 32px; }
  .head span { margin-left: 4px; }
  .h1 { margin-top: 51px; }
  .row { display: flex; align-items: center; }
  .status { height: 52px; margin-top: 44px; padding-left: 68px; }
  .ok { width: 564px; margin-top: -2px; color: #008000; font-size: 25.5px; letter-spacing: 0.03px; }
  .tool { display: grid; place-items: center; height: 52px; box-sizing: border-box; border: 2px solid #e1e4ec; background: #dde1e9; }
  .tool.wide { width: 56px; }
  .tool.eye { width: 52px; margin: 0 20px 0 22px; }
  .icon.small { width: 30px; height: 30px; }
  .h2 { margin-top: 60px; }
  .filter { height: 52px; margin-top: 49px; padding-left: 72px; }
  .check { flex: none; width: 28px; height: 28px; border-radius: 7px; background: linear-gradient(#187ae6, #166ccd); box-shadow: 0 1px 1px #77808c; fill: none; stroke: #f2f6fc; stroke-width: 3; stroke-linecap: round; stroke-linejoin: round; }
  .filters { width: 414px; height: 52px; box-sizing: border-box; padding-top: 2px; margin-left: 12px; border: 2px solid #e1e4ec; background: #dde1e8; display: grid; place-items: center; color: #fafbfd; font-size: 20px; font-weight: 500; }
  .list { width: 634px; height: 200px; box-sizing: border-box; margin: 28px 0 0 68px; padding: 0 0 0 14px; border: 2px solid #161616; background: #1e1e1e; }
  .item { display: flex; align-items: center; height: 44px; color: #fff; letter-spacing: -0.4px; }
  .item .check { box-shadow: none; }
  .icon.mini { width: 30px; height: 30px; margin: 0 13px 0 27px; }

  .view { display: flex; flex-direction: column; border-left: 2px solid #777; height: 655px; border-bottom: 2px solid #9a9a9a; min-width: 0; }
  .scene { flex: none; display: block; width: 864px; height: 614px; background: linear-gradient(#333366, #acacc3); }
  .dims { font: 15.5px "Liberation Sans", sans-serif; fill: #ea3018; stroke: #d03328; stroke-width: 0.7; }
  .axes { font: 9.5px "Liberation Sans", sans-serif; fill: #000; stroke: #000; stroke-width: 0.4; }
  .doctabs { flex: none; display: grid; grid-template-columns: 198px 476px 1fr; height: 41px; overflow: hidden; background: linear-gradient(#373737 21px, #2f2f2f 21px); }
  .doctabs .rule { height: 2px; margin-top: 20px; }
  .doctabs .rule.end { border: 0; background: #4a4a4a; border-radius: 0; }
  .doctabs .tabs { width: 464px; margin: 1px 0 0 6px; box-shadow: 0 0 0 6px #2f2f2f; }
  .tab.start { width: 214px; padding-left: 41px; box-sizing: border-box; letter-spacing: 0.3px; }
  .tab.doc { width: 250px; padding-left: 15px; box-sizing: border-box; }
  .x { width: 18px; height: 18px; margin-right: 13px; fill: none; stroke: #fff; stroke-width: 2; }

  .palette { position: absolute; left: 1160px; top: 303px; width: 466px; height: 454px; background: #2f2f2f; display: flex; align-items: flex-start; border-bottom: 1px solid #555; }
  .longgrip { flex: none; width: 4px; height: 432px; margin: 11px 2px 0 14px; background: radial-gradient(circle, #484848 1.8px, transparent 2.3px) 0 0 / 4px 12px; }
  .rows { width: 412px; margin-top: -3px; }
  .prow { display: flex; align-items: center; height: 92px; }
  .expand { width: 34px; height: 85px; box-sizing: border-box; padding: 33px 0 0 6px; overflow: hidden; background: #3a3a3a; border-radius: 5px 0 0 0; }
  .ink { position: absolute; left: 0; top: 0; width: 1626px; height: 1136px; fill: none; stroke: #ec4226; stroke-width: 4.6; stroke-linecap: round; stroke-linejoin: round; }
</style>
